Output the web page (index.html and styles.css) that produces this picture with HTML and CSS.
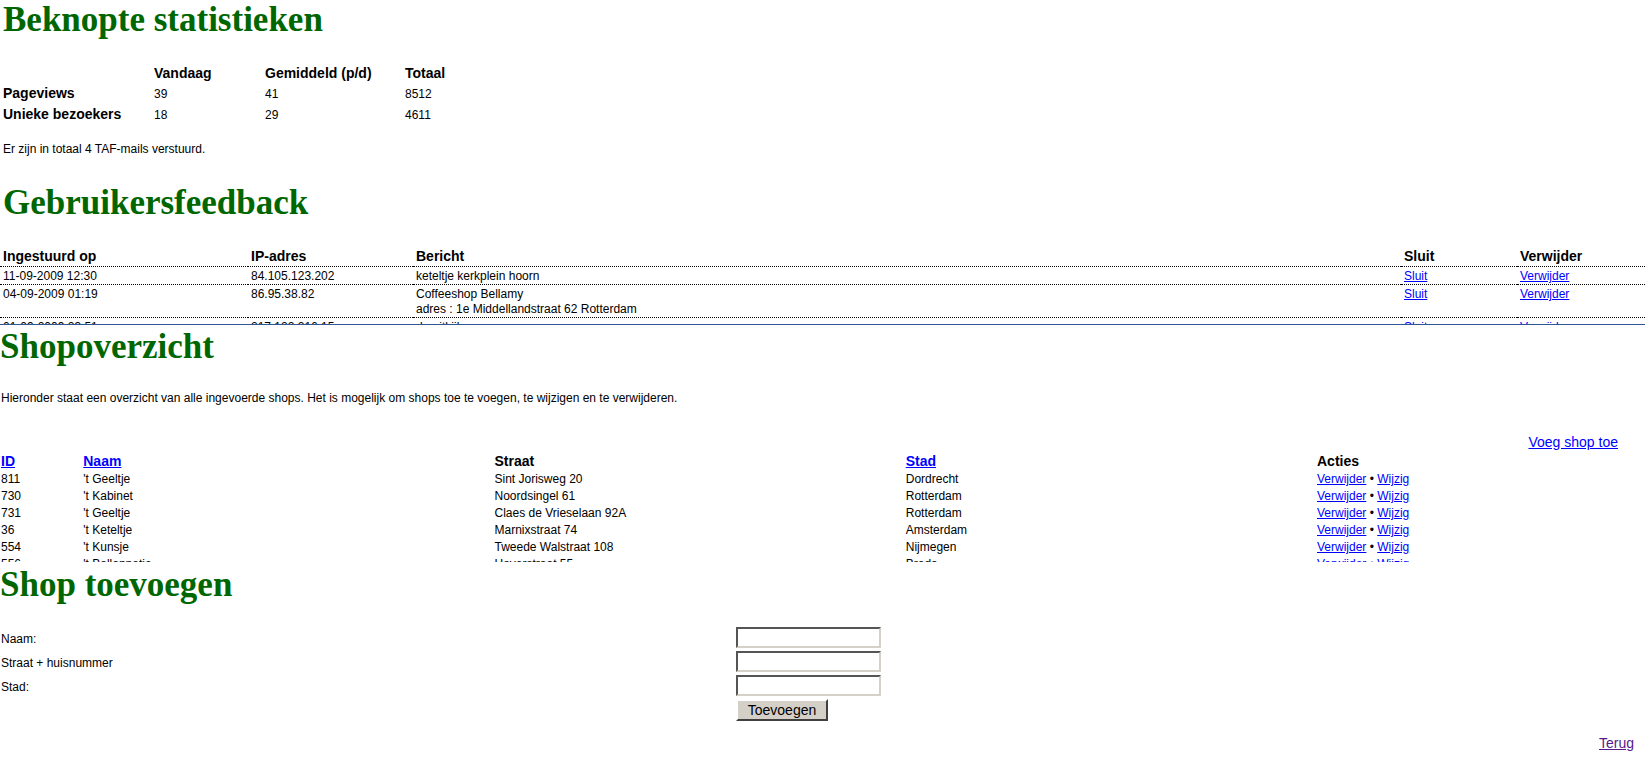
FILE: index.html
```html
<!DOCTYPE html>
<html lang="nl">
<head>
    <meta charset="UTF-8">
    <title>Beheer</title>
    <link rel="stylesheet" href="styles.css">
</head>
<body>

<div class="section stats">
    <h1>Beknopte statistieken</h1>
    <table class="stats-table">
        <colgroup>
            <col style="width:151px">
            <col style="width:111px">
            <col style="width:140px">
            <col style="width:100px">
        </colgroup>
        <tr class="head">
            <th></th>
            <th>Vandaag</th>
            <th>Gemiddeld (p/d)</th>
            <th>Totaal</th>
        </tr>
        <tr>
            <th>Pageviews</th>
            <td>39</td>
            <td>41</td>
            <td>8512</td>
        </tr>
        <tr>
            <th>Unieke bezoekers</th>
            <td>18</td>
            <td>29</td>
            <td>4611</td>
        </tr>
    </table>
    <p class="note">Er zijn in totaal 4 TAF-mails verstuurd.</p>

    <h1 class="spaced">Gebruikersfeedback</h1>
</div>

<div class="feedback-list">
    <table class="feedback-table">
        <colgroup>
            <col style="width:248px">
            <col style="width:165px">
            <col style="width:988px">
            <col style="width:116px">
            <col>
        </colgroup>
        <tr>
            <th>Ingestuurd op</th>
            <th>IP-adres</th>
            <th>Bericht</th>
            <th>Sluit</th>
            <th>Verwijder</th>
        </tr>
        <tr>
            <td>11-09-2009 12:30</td>
            <td>84.105.123.202</td>
            <td>keteltje kerkplein hoorn</td>
            <td><a href="#">Sluit</a></td>
            <td><a href="#">Verwijder</a></td>
        </tr>
        <tr>
            <td>04-09-2009 01:19</td>
            <td>86.95.38.82</td>
            <td>Coffeeshop Bellamy<br>adres : 1e Middellandstraat 62 Rotterdam</td>
            <td><a href="#">Sluit</a></td>
            <td><a href="#">Verwijder</a></td>
        </tr>
        <tr class="peek">
            <td>01-09-2009 23:51</td>
            <td>217.122.216.15</td>
            <td>de uitkijk</td>
            <td><a href="#">Sluit</a></td>
            <td><a href="#">Verwijder</a></td>
        </tr>
    </table>
</div>

<div class="section shops">
    <h1>Shopoverzicht</h1>
    <p class="intro">Hieronder staat een overzicht van alle ingevoerde shops. Het is mogelijk om shops toe te voegen, te wijzigen en te verwijderen.</p>

    <div class="add-link"><a href="#">Voeg shop toe</a></div>

    <div class="shop-list">
        <table class="shop-table">
            <colgroup>
                <col style="width:5%">
                <col style="width:25%">
                <col style="width:25%">
                <col style="width:25%">
                <col style="width:20%">
            </colgroup>
            <tr>
                <th><a href="#">ID</a></th>
                <th><a href="#">Naam</a></th>
                <th>Straat</th>
                <th><a href="#">Stad</a></th>
                <th>Acties</th>
            </tr>
            <tr>
                <td>811</td>
                <td>'t Geeltje</td>
                <td>Sint Jorisweg 20</td>
                <td>Dordrecht</td>
                <td><a href="#">Verwijder</a> &bull; <a href="#">Wijzig</a></td>
            </tr>
            <tr>
                <td>730</td>
                <td>'t Kabinet</td>
                <td>Noordsingel 61</td>
                <td>Rotterdam</td>
                <td><a href="#">Verwijder</a> &bull; <a href="#">Wijzig</a></td>
            </tr>
            <tr>
                <td>731</td>
                <td>'t Geeltje</td>
                <td>Claes de Vrieselaan 92A</td>
                <td>Rotterdam</td>
                <td><a href="#">Verwijder</a> &bull; <a href="#">Wijzig</a></td>
            </tr>
            <tr>
                <td>36</td>
                <td>'t Keteltje</td>
                <td>Marnixstraat 74</td>
                <td>Amsterdam</td>
                <td><a href="#">Verwijder</a> &bull; <a href="#">Wijzig</a></td>
            </tr>
            <tr>
                <td>554</td>
                <td>'t Kunsje</td>
                <td>Tweede Walstraat 108</td>
                <td>Nijmegen</td>
                <td><a href="#">Verwijder</a> &bull; <a href="#">Wijzig</a></td>
            </tr>
            <tr>
                <td>556</td>
                <td>'t Ballonnetje</td>
                <td>Haverstraat 55</td>
                <td>Breda</td>
                <td><a href="#">Verwijder</a> &bull; <a href="#">Wijzig</a></td>
            </tr>
        </table>
    </div>

    <h1 class="add-title">Shop toevoegen</h1>

    <form class="add-form">
        <label for="naam">Naam:</label>
        <input type="text" id="naam">
        <label for="straat">Straat + huisnummer</label>
        <input type="text" id="straat">
        <label for="stad">Stad:</label>
        <input type="text" id="stad">
        <span></span>
        <button type="button">Toevoegen</button>
    </form>

    <div class="back"><a class="visited" href="#">Terug</a></div>
</div>

</body>
</html>
```

FILE: styles.css
```css
body {
    margin: 0;
    font-family: Arial, "Liberation Sans", sans-serif;
    font-size: 12px;
    color: #000;
    background: #fff;
}

a {
    color: #0000ff;
}

a.visited {
    color: #551a8b;
}

h1 {
    margin: 0;
    font-family: "Liberation Serif", "Times New Roman", serif;
    font-size: 35px;
    line-height: 40px;
    font-weight: bold;
    color: #006600;
}

h1.spaced {
    margin-top: 26px;
}

table {
    border-collapse: collapse;
    table-layout: fixed;
}

th, td {
    padding: 0;
    text-align: left;
    vertical-align: top;
}

th {
    font-size: 14px;
    font-weight: bold;
}

/* statistieken */
.stats {
    padding-left: 3px;
}

.stats-table {
    width: 502px;
    margin-top: 24px;
}

.stats-table tr th,
.stats-table tr td {
    line-height: 20px;
    vertical-align: baseline;
}

.stats-table tr.head th {
    line-height: 19px;
}

.note {
    margin: 17px 0 0;
    line-height: 15px;
}

/* feedback */
.feedback-list {
    margin-top: 23px;
    height: 78px;
    overflow: hidden;
    border-bottom: 1px solid #2f5597;
}

.feedback-table {
    width: 100%;
}

.feedback-table tr {
    border-bottom: 1px dotted #000;
}

.feedback-table th {
    line-height: 20px;
    padding-left: 3px;
}

.feedback-table td {
    line-height: 15px;
    padding: 2px 0 0 3px;
}

.feedback-table tr.peek td {
    padding-top: 2px;
}

/* shops */
.shops h1 {
    margin-top: 2px;
}

.intro {
    margin: 24px 0 0 1px;
    line-height: 15px;
}

.add-link {
    margin-top: 28px;
    padding-right: 27px;
    text-align: right;
    font-size: 14px;
    line-height: 16px;
}

.shop-list {
    margin-top: 1px;
    height: 111px;
    overflow: hidden;
}

.shop-table {
    width: 100%;
}

.shop-table th {
    line-height: 20px;
    padding-left: 1px;
}

.shop-table td {
    line-height: 17px;
    padding-left: 1px;
}

.shops h1.add-title {
    margin-top: 3px;
}

.add-form {
    display: grid;
    grid-template-columns: 736px 145px;
    row-gap: 3px;
    margin-top: 22px;
}

.add-form label {
    padding: 3px 0 0 1px;
    line-height: 18px;
}

.add-form input {
    box-sizing: border-box;
    width: 145px;
    height: 21px;
    margin: 0;
    padding: 1px 3px;
    border: 2px solid;
    border-color: #555 #d4d0c8 #d4d0c8 #555;
    background: #fff;
    font-size: 12px;
}

.add-form button {
    box-sizing: border-box;
    width: 92px;
    height: 22px;
    margin: 0;
    padding: 0;
    background: #d4d0c8;
    border: 2px solid;
    border-color: #fff #404040 #404040 #fff;
    font-family: Arial, "Liberation Sans", sans-serif;
    font-size: 14px;
    color: #000;
}

.back {
    margin-top: 14px;
    padding-right: 11px;
    text-align: right;
    font-size: 14px;
    line-height: 16px;
}
```
